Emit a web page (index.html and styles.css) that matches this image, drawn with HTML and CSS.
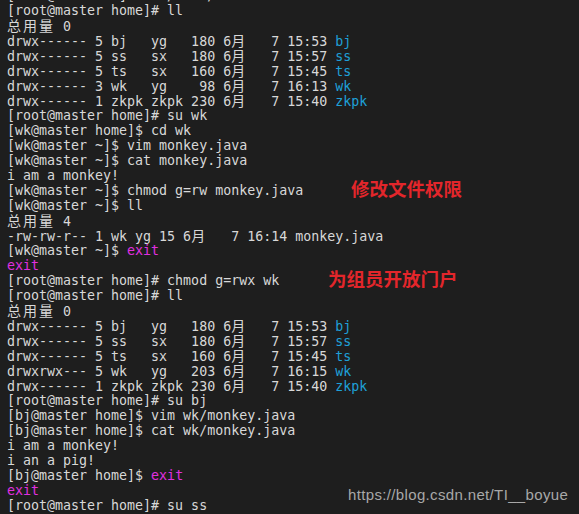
FILE: index.html
```html
<!DOCTYPE html>
<html>
<head>
<meta charset="utf-8">
<link rel="stylesheet" href="styles.css">
</head>
<body>
<div class="term">
<div class="l">[root@master ~]# cd /home/</div>
<div class="l">[root@master home]# ll</div>
<div class="l"><span class="w">总</span><span class="w">用</span><span class="w">量</span> 0</div>
<div class="l">drwx------ 5 bj   yg   180 6<span class="w">月</span>   7 15:53 <span class="b">bj</span></div>
<div class="l">drwx------ 5 ss   sx   180 6<span class="w">月</span>   7 15:57 <span class="b">ss</span></div>
<div class="l">drwx------ 5 ts   sx   160 6<span class="w">月</span>   7 15:45 <span class="b">ts</span></div>
<div class="l">drwx------ 3 wk   yg    98 6<span class="w">月</span>   7 16:13 <span class="b">wk</span></div>
<div class="l">drwx------ 1 zkpk zkpk 230 6<span class="w">月</span>   7 15:40 <span class="b">zkpk</span></div>
<div class="l">[root@master home]# su wk</div>
<div class="l">[wk@master home]$ cd wk</div>
<div class="l">[wk@master ~]$ vim monkey.java</div>
<div class="l">[wk@master ~]$ cat monkey.java</div>
<div class="l">i am a monkey!</div>
<div class="l">[wk@master ~]$ chmod g=rw monkey.java<span class="note note1">修改文件权限</span></div>
<div class="l">[wk@master ~]$ ll</div>
<div class="l"><span class="w">总</span><span class="w">用</span><span class="w">量</span> 4</div>
<div class="l">-rw-rw-r-- 1 wk yg 15 6<span class="w">月</span>   7 16:14 monkey.java</div>
<div class="l">[wk@master ~]$ <span class="m">exit</span></div>
<div class="l"><span class="m">exit</span></div>
<div class="l">[root@master home]# chmod g=rwx wk<span class="note note2">为组员开放门户</span></div>
<div class="l">[root@master home]# ll</div>
<div class="l"><span class="w">总</span><span class="w">用</span><span class="w">量</span> 0</div>
<div class="l">drwx------ 5 bj   yg   180 6<span class="w">月</span>   7 15:53 <span class="b">bj</span></div>
<div class="l">drwx------ 5 ss   sx   180 6<span class="w">月</span>   7 15:57 <span class="b">ss</span></div>
<div class="l">drwx------ 5 ts   sx   160 6<span class="w">月</span>   7 15:45 <span class="b">ts</span></div>
<div class="l">drwxrwx--- 5 wk   yg   203 6<span class="w">月</span>   7 16:15 <span class="b">wk</span></div>
<div class="l">drwx------ 1 zkpk zkpk 230 6<span class="w">月</span>   7 15:40 <span class="b">zkpk</span></div>
<div class="l">[root@master home]# su bj</div>
<div class="l">[bj@master home]$ vim wk/monkey.java</div>
<div class="l">[bj@master home]$ cat wk/monkey.java</div>
<div class="l">i am a monkey!</div>
<div class="l">i an a pig!</div>
<div class="l">[bj@master home]$ <span class="m">exit</span></div>
<div class="l"><span class="m">exit</span></div>
<div class="l">[root@master home]# su ss</div>
</div>
<div class="wm">https://blog.csdn.net/TI__boyue</div>
</body>
</html>
```
FILE: styles.css
```css
html, body {
  margin: 0;
  padding: 0;
  width: 579px;
  height: 514px;
  overflow: hidden;
  background: #1e1e1e;
}
body {
  position: relative;
}
.term {
  margin-top: -12px;
  padding-left: 7px;
  font-family: "DejaVu Sans Mono", "Liberation Mono", "Noto Sans CJK SC", monospace;
  font-size: 13.3px;
  line-height: 15px;
  color: #d8d8d8;
}
.l {
  white-space: pre;
  height: 15px;
  position: relative;
}
.w {
  display: inline-block;
  width: 16px;
  font-family: "Noto Sans CJK SC", sans-serif;
  font-size: 14px;
  text-align: left;
}
.b { color: #1ea0d8; }
.m { color: #e030e0; }
.note {
  position: absolute;
  top: -6px;
  font-family: "Noto Sans CJK SC", sans-serif;
  font-weight: 700;
  font-size: 18.5px;
  line-height: 22px;
  color: #e3262b;
}
.note1 { left: 344px; }
.note2 { left: 321px; }
.wm {
  position: absolute;
  left: 348px;
  top: 486px;
  font-family: "Liberation Sans", Arial, sans-serif;
  font-size: 15px;
  letter-spacing: 0.35px;
  color: #a8a8a8;
}
```
